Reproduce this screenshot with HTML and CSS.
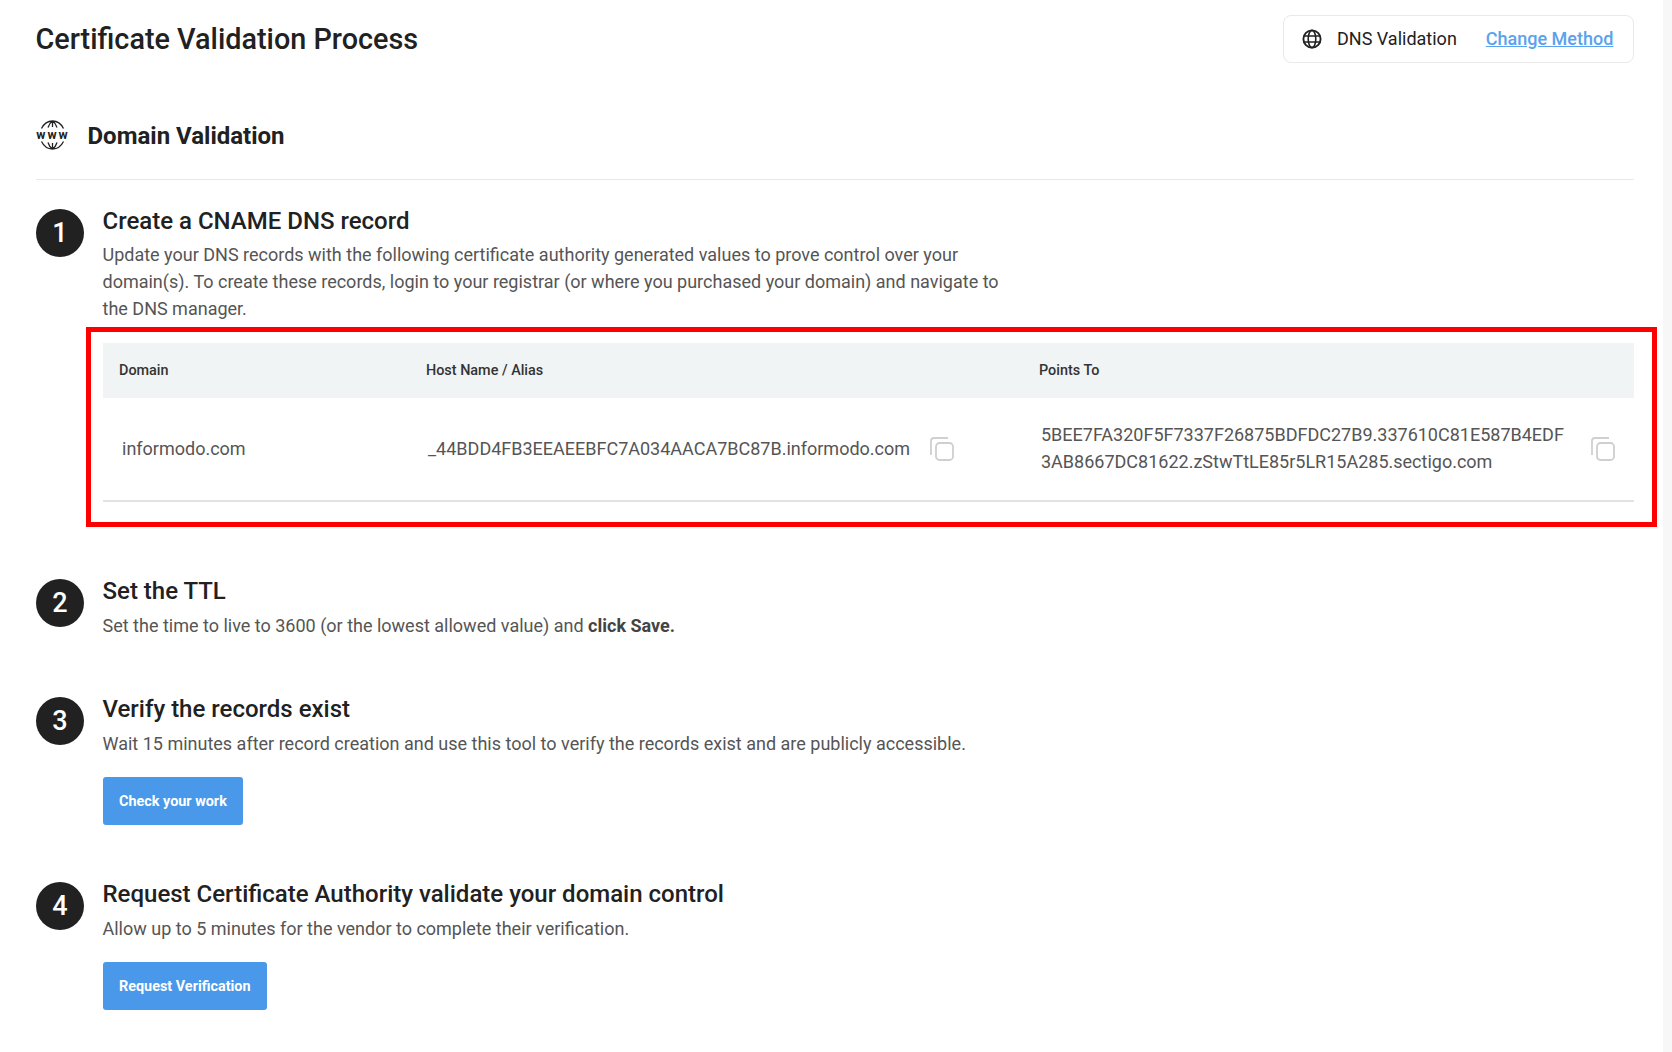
FILE: index.html
```html
<!DOCTYPE html>
<html lang="en">
<head>
<meta charset="utf-8">
<title>Certificate Validation Process</title>
<link rel="stylesheet" href="styles.css">
</head>
<body>
<main class="page">
  <header class="top">
    <h1 class="title">Certificate Validation Process</h1>
    <div class="method">
      <svg class="globe" viewBox="0 0 20 20" width="20" height="20"><circle cx="10" cy="10" r="8.6" fill="none" stroke="#222" stroke-width="1.9"/><ellipse cx="10" cy="10" rx="3.8" ry="8.6" fill="none" stroke="#222" stroke-width="1.6"/><path d="M1.5 7h17M1.5 13h17" stroke="#222" stroke-width="1.6"/></svg>
      <span class="method-name">DNS Validation</span>
      <a class="method-link" href="#">Change Method</a>
    </div>
  </header>

  <div class="section">
    <svg class="www" viewBox="0 0 32 30" width="32" height="30">
      <path d="M5 8.500C7.500 3.500 11.500 1 16 1S24.500 3.500 27 8.500M11.500 7.500C12.200 5 13.800 2.500 16 1C18.200 2.500 19.800 5 20.500 7.500M16 1V7" fill="none" stroke="#222" stroke-width="1.300"/>
      <path d="M5 21.500C7.500 26.500 11.500 29 16 29S24.500 26.500 27 21.500M11.500 22.500C12.200 25 13.800 27.500 16 29C18.200 27.500 19.800 25 20.500 22.500M16 29V23" fill="none" stroke="#222" stroke-width="1.300"/>
      <text class="www-text" x="16.500" y="19" text-anchor="middle">www</text>
    </svg>
    <h2 class="section-title">Domain Validation</h2>
  </div>

  <section class="step step-one">
    <div class="num">1</div>
    <div class="body">
      <h3 class="step-title">Create a CNAME DNS record</h3>
      <p class="desc desc-wide">Update your DNS records with the following certificate authority generated values to prove control over your domain(s). To create these records, login to your registrar (or where you purchased your domain) and navigate to the DNS manager.</p>
      <div class="highlight">
        <div class="thead">
          <div>Domain</div>
          <div>Host Name / Alias</div>
          <div>Points To</div>
        </div>
        <div class="trow">
          <div class="cell cell-domain">informodo.com</div>
          <div class="cell cell-host">
            <span class="cell-text">_44BDD4FB3EEAEEBFC7A034AACA7BC87B.informodo.com</span>
            <svg class="copy copy-host" viewBox="0 0 24 24" width="24" height="24"><path d="M1 18V4a3 3 0 0 1 3-3h14" fill="none" stroke="#d0d0d0" stroke-width="1.800"/><rect x="6" y="6" width="17" height="17" rx="3.500" fill="none" stroke="#cfcfcf" stroke-width="1.800"/></svg>
          </div>
          <div class="cell cell-points">
            <span class="cell-text">5BEE7FA320F5F7337F26875BDFDC27B9.337610C81E587B4EDF<br>3AB8667DC81622.zStwTtLE85r5LR15A285.sectigo.com</span>
            <svg class="copy copy-points" viewBox="0 0 24 24" width="24" height="24"><path d="M1 18V4a3 3 0 0 1 3-3h14" fill="none" stroke="#d0d0d0" stroke-width="1.800"/><rect x="6" y="6" width="17" height="17" rx="3.500" fill="none" stroke="#cfcfcf" stroke-width="1.800"/></svg>
          </div>
        </div>
      </div>
    </div>
  </section>

  <section class="step step-two">
    <div class="num">2</div>
    <div class="body">
      <h3 class="step-title">Set the TTL</h3>
      <p class="desc">Set the time to live to 3600 (or the lowest allowed value) and <strong>click Save.</strong></p>
    </div>
  </section>

  <section class="step step-three">
    <div class="num">3</div>
    <div class="body">
      <h3 class="step-title">Verify the records exist</h3>
      <p class="desc">Wait 15 minutes after record creation and use this tool to verify the records exist and are publicly accessible.</p>
      <button class="btn" type="button">Check your work</button>
    </div>
  </section>

  <section class="step step-four">
    <div class="num">4</div>
    <div class="body">
      <h3 class="step-title">Request Certificate Authority validate your domain control</h3>
      <p class="desc">Allow up to 5 minutes for the vendor to complete their verification.</p>
      <button class="btn" type="button">Request Verification</button>
    </div>
  </section>
</main>
<div class="scrollbar"></div>
</body>
</html>
```

FILE: styles.css
```css
* { box-sizing: border-box; }
html, body { margin: 0; height: 100%; overflow: hidden; }
body {
  display: flex;
  background: #fff;
  color: #212121;
  font-family: Roboto, "Liberation Sans", sans-serif;
}
.page { flex: 1; min-width: 0; padding: 15px 29px 0 36px; }
.scrollbar { width: 9px; background: #f7f7f7; }

.top { display: flex; justify-content: space-between; align-items: flex-start; height: 47px; }
.title { margin: 1px 0 0 -0.500px; font-size: 28.800px; line-height: 47px; font-weight: 500; }
.method {
  display: flex; align-items: center; width: 351px; height: 48px;
  padding: 0 0 1px 18px;
  border: 1px solid #e9e9e9; border-radius: 8px;
}
.globe { flex: none; }
.method-name { margin-left: 15px; font-size: 18px; }
.method-link { margin-left: 29px; font-size: 18px; font-weight: 500; color: #5aa2ee; }

.section {
  display: flex; align-items: center;
  margin-top: 50px; height: 68px; padding-bottom: 21px;
  border-bottom: 1px solid #e8e8e8;
}
.www { flex: none; width: 33px; }
.www-text { font: 700 12.500px Roboto, sans-serif; letter-spacing: 2px; fill: #222; }
.section-title { margin: 1px 0 0 18.500px; font-size: 24px; line-height: 30px; font-weight: 700; }

.step { display: flex; }
.step-one { margin-top: 29px; }
.step-two { margin-top: 52px; }
.step-three { margin-top: 58px; }
.step-four { margin-top: 57px; }
.num {
  flex: none; width: 48px; height: 48px; border-radius: 50%;
  background: #212121; color: #fff;
  display: flex; align-items: center; justify-content: center;
  font-size: 27px; font-weight: 500;
}
.body { flex: 1; min-width: 0; margin-left: 19px; }
.step-title { margin: -3px 0 0 -0.500px; font-size: 24px; line-height: 30px; font-weight: 500; }
.desc { margin: 6px 0 0 -0.500px; font-size: 18px; line-height: 27px; color: #555; }
.desc-wide { max-width: 905px; margin-top: 5px; }
.desc strong { font-weight: 700; color: #444; }

.highlight {
  margin: 5px -23px 0 -17px;
  padding: 11px 18px 18px 12px;
  border: 5px solid #f00;
  height: 200px;
}
.thead {
  display: grid; grid-template-columns: 307px 613px 1fr;
  align-items: center; height: 55px;
  padding-left: 16px;
  background: #f1f4f5;
  font-size: 14.400px; font-weight: 500; color: #333;
}
.trow {
  display: grid; grid-template-columns: 306px 613px 1fr;
  align-items: center; height: 104px;
  padding-left: 19px;
  border-bottom: 2px solid #e2e2e2;
  font-size: 18px; line-height: 27px; color: #555;
}
.cell-domain { margin-top: -2px; }
.cell-text { margin-top: -2px; }
.cell-host, .cell-points { display: flex; align-items: center; }
.copy { flex: none; }
.copy-host { margin-left: 20px; }
.copy-points { margin-left: 27px; }

.btn {
  display: block; margin-top: 20px; height: 48px; padding: 1px 16px 0;
  border: 0; border-radius: 3px;
  background: #4a98ea; color: #fff;
  font-family: Roboto, sans-serif; font-size: 14.400px; font-weight: 700;
}
```
